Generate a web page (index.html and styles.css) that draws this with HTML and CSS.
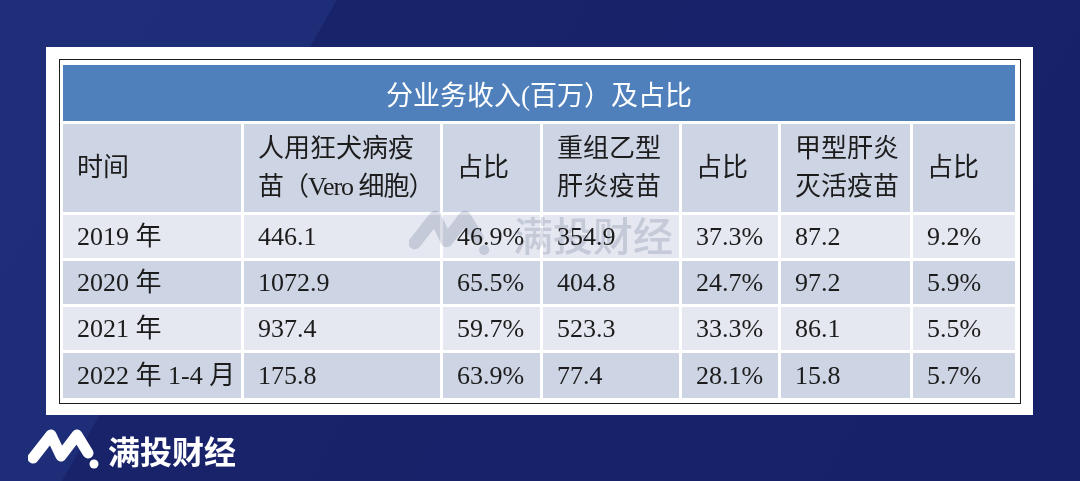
FILE: index.html
```html
<!DOCTYPE html>
<html lang="zh-CN">
<head>
<meta charset="utf-8">
<title>分业务收入</title>
<link rel="stylesheet" href="styles.css">
</head>
<body>
<div class="page">
  <div class="card">
    <div class="frame">
      <table class="data">
        <colgroup>
          <col class="c1"><col class="c2"><col class="c3"><col class="c4"><col class="c5"><col class="c6"><col class="c7">
        </colgroup>
        <tr class="title"><td colspan="7">分业务收入(百万）及占比</td></tr>
        <tr class="head">
          <td>时间</td>
          <td>人用狂犬病疫<br><span class="tight">苗（Vero 细胞）</span></td>
          <td>占比</td>
          <td>重组乙型<br>肝炎疫苗</td>
          <td>占比</td>
          <td>甲型肝炎<br>灭活疫苗</td>
          <td>占比</td>
        </tr>
        <tr class="row light">
          <td>2019 年</td><td>446.1</td><td>46.9%</td><td>354.9</td><td>37.3%</td><td>87.2</td><td>9.2%</td>
        </tr>
        <tr class="row dark">
          <td>2020 年</td><td>1072.9</td><td>65.5%</td><td>404.8</td><td>24.7%</td><td>97.2</td><td>5.9%</td>
        </tr>
        <tr class="row light">
          <td>2021 年</td><td>937.4</td><td>59.7%</td><td>523.3</td><td>33.3%</td><td>86.1</td><td>5.5%</td>
        </tr>
        <tr class="row dark last">
          <td>2022 年 1-4 月</td><td>175.8</td><td>63.9%</td><td>77.4</td><td>28.1%</td><td>15.8</td><td>5.7%</td>
        </tr>
      </table>
    </div>
  </div>

  <div class="brand">
    <svg class="logo" width="72" height="42" viewBox="0 0 72 42" aria-hidden="true">
      <polyline points="5,29 23,6 33,27 49,6 60,24" fill="none" stroke="#ffffff" stroke-width="11" stroke-linecap="round" stroke-linejoin="round"/>
      <circle cx="66" cy="35" r="4.5" fill="#ffffff"/>
    </svg>
    <span class="brand-name">满投财经</span>
  </div>

  <div class="watermark" aria-hidden="true">
    <svg class="wm-logo" width="82" height="48" viewBox="0 0 72 42">
      <polyline points="5,29 23,6 33,27 49,6 60,24" fill="none" stroke="currentColor" stroke-width="11" stroke-linecap="round" stroke-linejoin="round"/>
      <circle cx="66" cy="35" r="4.5" fill="currentColor"/>
    </svg>
    <span class="wm-name">满投财经</span>
  </div>
</div>
</body>
</html>
```

FILE: styles.css
```css
html, body {
  margin: 0;
  padding: 0;
}

body {
  width: 1080px;
  height: 481px;
  overflow: hidden;
  background: linear-gradient(119.76deg, #1e2e79 0, #1d2d77 292px, #18236a 293px, #17216a 100%);
  font-family: "Liberation Serif", "Noto Sans CJK SC", serif;
}

.page {
  position: relative;
  width: 1080px;
  height: 481px;
  padding: 47px 0 0 46px;
  box-sizing: border-box;
}

.card {
  width: 987px;
  height: 368px;
  box-sizing: border-box;
  background: #ffffff;
  padding: 12px 12px 11px 13px;
}

.frame {
  border: 1px solid #1b1b1b;
  padding: 2px 2px 2px 0;
  width: 962px;
  box-sizing: border-box;
}

.data {
  width: 958px;
  table-layout: fixed;
  border-collapse: separate;
  border-spacing: 3px;
  color: #1c1c1c;
  font-size: 26px;
}

.c1 { width: 178px; }
.c2 { width: 196px; }
.c3 { width: 97px; }
.c4 { width: 136px; }
.c5 { width: 96px; }
.c6 { width: 129px; }
.c7 { width: 102px; }

.data td {
  padding: 0 0 0 14px;
  vertical-align: middle;
  white-space: nowrap;
}

.tight {
  letter-spacing: -1px;
}

.title td {
  height: 56px;
  background: #4f80bc;
  color: #ffffff;
  text-align: center;
  font-size: 27px;
  padding: 0;
}

.head td {
  height: 88px;
  background: #cdd4e4;
  line-height: 38px;
}

.row td {
  height: 43px;
  line-height: 30px;
}

.row.last td {
  height: 45px;
}

.light td {
  background: #e5e8f0;
}

.dark td {
  background: #cdd4e4;
}

.brand {
  display: flex;
  align-items: center;
  gap: 8px;
  margin: 14px 0 0 -18px;
  height: 42px;
}

.brand-name {
  font-family: "Noto Sans CJK SC", sans-serif;
  font-weight: 700;
  font-size: 32px;
  color: #ffffff;
  line-height: 42px;
}

.watermark {
  position: absolute;
  left: 409px;
  top: 210px;
  display: flex;
  align-items: center;
  gap: 22px;
  color: #dcdee7;
  mix-blend-mode: multiply;
  pointer-events: none;
}

.wm-name {
  font-family: "Noto Sans CJK SC", sans-serif;
  font-size: 40px;
  font-weight: 500;
  line-height: 48px;
  color: #dcdee7;
}
```
